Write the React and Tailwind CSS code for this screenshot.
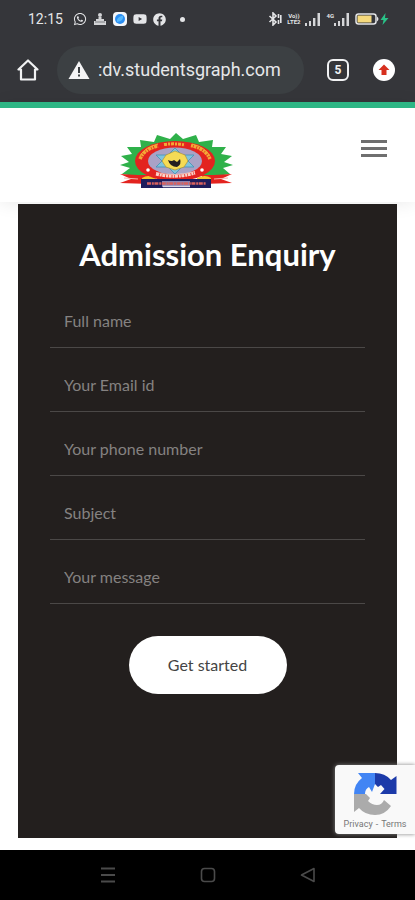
import { useState } from 'react';
import { FaWhatsapp, FaYoutube, FaFacebook } from 'react-icons/fa';

const FIELDS = [
    { name: 'name', label: 'Full name', type: 'text' },
    { name: 'email', label: 'Your Email id', type: 'email' },
    { name: 'phone', label: 'Your phone number', type: 'tel' },
    { name: 'subject', label: 'Subject', type: 'text' },
    { name: 'message', label: 'Your message', type: 'text' },
];

function Crest() {
    return (
        <svg viewBox="0 0 113 55" className="h-[55px] w-[113px]" aria-hidden="true">
            <polygon
                fill="#2fb14a"
                points="56,0 63,6 76,2 79,9 93,7 92,14 106,14 101,21 112,23 104,29 113,32 103,35 110,41 97,43 15,43 2,41 10,35 0,32 9,29 1,23 12,21 7,14 21,14 20,7 34,9 37,2 50,6"
            />
            <path fill="#e3231f" d="M0 41 L18 42 L30 42 V51 L0 50 L11 46 Z M112 41 L94 42 L82 42 V51 L112 50 L101 46 Z" />
            <path d="M4 45 L18 46 M108 45 L94 46" stroke="#f6b3ab" strokeWidth="1" />
            <path fill="#f3c62c" d="M22 45 Q28 41 36 45 V48 H22 Z M91 45 Q85 41 77 45 V48 H91 Z" />
            <ellipse cx="55" cy="28" rx="40" ry="20" fill="#e3231f" />
            <ellipse cx="55" cy="28" rx="27" ry="13.5" fill="#a9a2c6" />
            <path d="M55 15 L74 34 H36 Z M55 41 L36 22 H74 Z" fill="#7fc4dc" stroke="#4191b5" strokeWidth="0.8" />
            <path d="M46 22 L55 18 L65 22 L68 28 L64 34 L55 37 L46 34 L42 28 Z" fill="#f5db55" stroke="#a88a31" strokeWidth="0.6" />
            <path d="M48 27 Q52 29 54 27 L57 29 L60 26 Q62 31 57 34 Q50 34 48 27 Z" fill="#231f20" />
            <g fill="none" stroke="#f3a936">
                <path d="M20 26 Q24 16 38 13" strokeWidth="3.5" strokeDasharray="3 0.6 2 0.8" />
                <path d="M44 11.500 Q55 10 65 12" strokeWidth="3" strokeDasharray="3 1 2 1" />
                <path d="M71 12.500 Q86 16 90 26" strokeWidth="3.5" strokeDasharray="2 0.6 3 0.800" />
                <path d="M20 23 Q25 14 38 11 M72 11 Q85 14 90 23" strokeWidth="1" />
            </g>
            <path d="M36 41 Q55 46 75 40" fill="none" stroke="#fbd3c8" strokeWidth="3" strokeDasharray="3 0.800 2 0.600" />
            <path d="M36 39.500 Q55 44 75 38.500" fill="none" stroke="#fbd3c8" strokeWidth="0.800" />
            <circle cx="28" cy="37" r="1.800" fill="#fff" />
            <circle cx="82" cy="37" r="1.800" fill="#fff" />
            <rect x="21" y="46" width="70" height="9" fill="#1d1c5c" />
            <rect x="42" y="48" width="28" height="6" fill="#8b83b0" />
            <path d="M27 50.500 H86" stroke="#d9625f" strokeWidth="2.500" strokeDasharray="4 0.800 2 0.600" />
            <path d="M43 53.500 H70" stroke="#d9d3e4" strokeWidth="1.500" />
        </svg>
    );
}

function SignalBars() {
    return (
        <svg viewBox="0 0 16 13" className="h-[13px] w-4" fill="#d5d6d8" aria-hidden="true">
            <rect x="0" y="10" width="2" height="3" />
            <rect x="4" y="8" width="2" height="5" />
            <rect x="8" y="5" width="2.4" height="8" />
            <rect x="12.5" y="0" width="2.5" height="13" />
        </svg>
    );
}

function StatusBar() {
    return (
        <div className="flex h-[38px] items-center justify-between pl-7 pr-[26px] text-[#e4e5e7]">
            <div className="flex items-center gap-[6px]">
                <span className="mr-1 text-[14px] leading-5">12:15</span>
                <FaWhatsapp className="size-[14px]" />
                <svg viewBox="0 0 14 14" className="size-[14px]" fill="#d3d4d6" aria-hidden="true">
                    <circle cx="7" cy="3" r="2" />
                    <path d="M5.500 5 H8.500 V7 H11 V9 H13 V13 H1 V9 H3 V7 H5.500 Z" />
                    <path d="M2 10 H12" stroke="#7b7c80" strokeWidth="1" />
                </svg>
                <svg viewBox="0 0 14 14" className="size-[14px]" aria-hidden="true">
                    <rect width="14" height="14" rx="4" fill="#f4f6f9" />
                    <circle cx="7" cy="7" r="5" fill="#2b8df0" />
                    <path d="M4 10 Q3 5 10 3.500 Q11 9 4 10 Z" fill="#54b7fb" />
                </svg>
                <FaYoutube className="size-[14px]" />
                <FaFacebook className="size-[13px]" />
                <span className="ml-2 size-[5px] rounded-full bg-[#e4e5e7]" />
            </div>
            <div className="flex items-center gap-[5px]">
                <svg viewBox="0 0 14 14" className="size-[14px]" fill="none" stroke="#e4e5e7" strokeWidth="1.6" aria-hidden="true">
                    <path d="M1.500 4 L8 10 L5 13 V1 L8 4 L1.500 10" />
                    <path d="M10.500 2 V6 M10.500 8 V12 M12.800 3 V11" />
                </svg>
                <div className="flex flex-col items-center text-[6px] leading-[6px] font-bold">
                    <span>Vo))</span>
                    <span>LTE2</span>
                </div>
                <SignalBars />
                <div className="flex items-start">
                    <span className="text-[6px] leading-[6px] font-bold">4G</span>
                    <SignalBars />
                </div>
                <svg viewBox="0 0 34 14" className="h-[14px] w-[34px]" aria-hidden="true">
                    <rect x="1" y="2" width="20" height="10" rx="2.500" fill="none" stroke="#e4e5e7" strokeWidth="1.500" />
                    <rect x="2.500" y="3.500" width="14" height="7" fill="#f5d97c" />
                    <path d="M22 4.500 Q25 7 22 9.500 Z" fill="#e4e5e7" />
                    <path d="M30.500 1 L25.500 8 H28.500 L27.500 13 L33.500 6 H30 Z" fill="#29c287" />
                </svg>
            </div>
        </div>
    );
}

function AddressBar() {
    return (
        <div className="flex h-16 items-center pl-[17px] pr-5 pb-px">
            <button type="button" aria-label="Home">
                <svg viewBox="0 0 22 22" className="size-[22px]" fill="none" stroke="#f1f2f3" strokeWidth="2.200" strokeLinejoin="round" aria-hidden="true">
                    <path d="M11 1.500 L1.500 10.500 H4 V20.500 H18 V10.500 H20.500 Z" />
                </svg>
            </button>
            <div className="ml-[18px] flex h-12 min-w-0 flex-1 items-center gap-2 rounded-full bg-[#3c4043] px-[11px]">
                <svg viewBox="0 0 22 20" className="h-5 w-[22px] shrink-0" aria-hidden="true">
                    <path d="M11 1 L21.500 19 H0.500 Z" fill="#f4f4f5" />
                    <path d="M11 7 V13 M11 14.500 V16.500" stroke="#3c4043" strokeWidth="2" />
                </svg>
                <input aria-label="Address" type="text" defaultValue=":dv.studentsgraph.com" className="w-full min-w-0 bg-transparent text-[18px] leading-6 text-[#e6e7e9] outline-none" />
            </div>
            <button type="button" aria-label="Open tabs" className="ml-[23px] flex size-[22px] items-center justify-center rounded-md border-2 border-[#f1f2f3] text-[12px] leading-4 font-bold text-[#f1f2f3]">5</button>
            <button type="button" aria-label="Update available" className="ml-6 flex size-[22px] items-center justify-center rounded-full bg-white">
                <svg viewBox="0 0 12 12" className="size-3" fill="#d7301f" aria-hidden="true">
                    <path d="M6 0.500 L11.500 6 H8.500 V11 H3.500 V6 H0.500 Z" />
                </svg>
            </button>
        </div>
    );
}

function RecaptchaBadge() {
    return (
        <div className="absolute right-0 bottom-4 flex h-[69px] w-20 flex-col items-center rounded-l-[4px] bg-[#f9f9f9] pt-[7px] shadow-[0_0_4px_#808080]">
            <svg viewBox="0 0 44 44" className="size-11" aria-hidden="true">
                <path fill="#1c3aa9" d="M22 1 Q32 1 38 8 L43.500 4 V22 H27 L31.500 17 L28 13 L25 15 L22 12 Z" />
                <path fill="#4285f4" d="M22 1 H5 L9 6 Q1 12 1 22 H12 Q12 17 16 15 L19 20 L22 12 Z" />
                <path fill="#ababab" d="M1 22 H13 L17 26 L15 29 Q19 33 24 33 Q29 33 31 28 L38 34 Q32 43 22 43 Q12 43 6 36 L1 40 Z" />
            </svg>
            <div className="flex gap-[3px] text-[9px] leading-4 text-[#777]">
                <a href="#privacy">Privacy</a>
                <span>-</span>
                <a href="#terms">Terms</a>
            </div>
        </div>
    );
}

export default function App() {
    const [form, setForm] = useState({});

    return (
        <div className="flex min-h-screen flex-col bg-white font-['Roboto',sans-serif]">
            <div className="bg-[#35363a]">
                <StatusBar />
                <AddressBar />
            </div>

            <header className="flex h-[100px] items-start border-t-6 border-[#2eb685] pl-[120px] pr-7 shadow-[0_2px_16px_rgba(0,0,0,0.08)]">
                <a href="#home" aria-label="College home" className="mt-[25px]"><Crest /></a>
                <button type="button" aria-label="Menu" className="mt-8 ml-auto flex flex-col gap-1">
                    <span className="h-[3px] w-[26px] bg-[#6f6f6f]" />
                    <span className="h-[3px] w-[26px] bg-[#6f6f6f]" />
                    <span className="h-[3px] w-[26px] bg-[#6f6f6f]" />
                </button>
            </header>

            <main className="relative flex flex-1 flex-col px-[18px] pt-[2px] pb-3">
                <section className="flex-1 bg-[#231f1e] px-8 pt-[30px] font-['Lato',sans-serif] text-center">
                    <h1 className="text-[31px] leading-10 font-bold text-white">Admission Enquiry</h1>
                    <form onSubmit={e => e.preventDefault()}>
                        <div className="mt-5 flex flex-col gap-[10px]">
                            {FIELDS.map(f => (
                                <input
                                    key={f.name}
                                    type={f.type}
                                    aria-label={f.label}
                                    placeholder={f.label}
                                    value={form[f.name] || ''}
                                    onChange={e => setForm({ ...form, [f.name]: e.target.value })}
                                    className="h-[54px] w-full border-b border-[#4b4847] px-[14px] text-[16px] leading-6 text-white outline-none placeholder:text-[#858281]"
                                />
                            ))}
                        </div>
                        <button type="submit" className="mt-8 h-[58px] w-[158px] rounded-full bg-white text-[16px] leading-6 text-[#444]">Get started</button>
                    </form>
                </section>
                <RecaptchaBadge />
            </main>

            <nav aria-label="System" className="flex h-[50px] items-center justify-center gap-[84px] bg-black text-[#4a4a4a]">
                <button type="button" aria-label="Recent apps">
                    <svg viewBox="0 0 16 16" className="size-4" stroke="currentColor" strokeWidth="2" aria-hidden="true">
                        <path d="M1 1.500 H15 M1 8 H15 M1 14.500 H15" />
                    </svg>
                </button>
                <button type="button" aria-label="Home screen">
                    <svg viewBox="0 0 16 16" className="size-4" fill="none" stroke="currentColor" strokeWidth="1.600" aria-hidden="true">
                        <rect x="1.500" y="1.500" width="13" height="13" rx="3" />
                    </svg>
                </button>
                <button type="button" aria-label="Back">
                    <svg viewBox="0 0 16 16" className="size-4" fill="none" stroke="currentColor" strokeWidth="1.600" strokeLinejoin="round" aria-hidden="true">
                        <path d="M14 1.500 V14.500 L1.500 8 Z" />
                    </svg>
                </button>
            </nav>
        </div>
    );
}
